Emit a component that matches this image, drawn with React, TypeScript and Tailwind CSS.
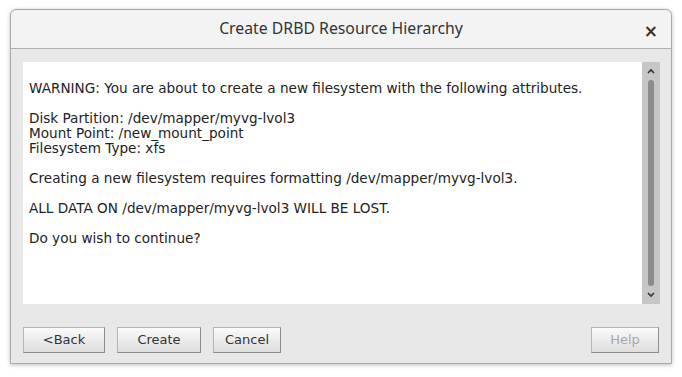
import React from 'react'

/* ── Dialog text ── */

const LINES = [
  'WARNING: You are about to create a new filesystem with the following attributes.',
  '',
  'Disk Partition: /dev/mapper/myvg-lvol3',
  'Mount Point: /new_mount_point',
  'Filesystem Type: xfs',
  '',
  'Creating a new filesystem requires formatting /dev/mapper/myvg-lvol3.',
  '',
  'ALL DATA ON /dev/mapper/myvg-lvol3 WILL BE LOST.',
  '',
  'Do you wish to continue?',
]

function SwingButton({ label, disabled, className }: { label: string; disabled?: boolean; className: string }) {
  return (
    <button
      disabled={disabled}
      className={`h-[26px] border border-[#b4b4b4] border-b-[#8e8e8e] border-r-[#8e8e8e] bg-gradient-to-b from-[#fafafa] to-[#dedede] text-[13px] ${
        disabled ? 'text-[#a8a8a8]' : 'text-[#333]'
      } ${className}`}
    >
      {label}
    </button>
  )
}

export default function App() {
  return (
    <div className="w-[682px] h-[377px] bg-white pt-[9px] pl-[10px] font-['DejaVu_Sans',sans-serif]">
      <div className="w-[662px] h-[355px] flex flex-col border border-[#a9a9a9] rounded-t-[6px] bg-[#e8e8e8] shadow-[0_1px_4px_rgba(0,0,0,0.25)]">
        {/* Title bar */}
        <div className="h-[39px] shrink-0 relative flex items-center justify-center bg-[#f3f3f3] border-b border-[#b0b0b0] rounded-t-[6px]">
          <span className="text-[15.8px] text-[#2e3436] font-['Noto_Sans',sans-serif]">Create DRBD Resource Hierarchy</span>
          <span className="absolute right-[13px] top-[9px] text-[17px] font-bold text-[#2e3436] font-['DejaVu_Sans',sans-serif]">×</span>
        </div>

        {/* Body */}
        <div className="flex-1 flex flex-col pt-[13px] pl-[12px] pr-[11px]">
          <div className="h-[242px] flex bg-white">
            <div className="flex-1 pt-[19px] pl-[6px] text-[13.6px] leading-[15px] text-[#222]">
              {LINES.map((l, i) => (
                <div key={i} className="h-[15px] whitespace-pre">{l}</div>
              ))}
            </div>
            {/* Scrollbar */}
            <div className="w-[18px] flex flex-col items-center bg-[#c6c6c6]">
              <svg width="10" height="8" viewBox="0 0 10 8" className="mt-[5px]">
                <path d="M2 6 L5 3 L8 6" stroke="#333" strokeWidth="1.6" fill="none" />
              </svg>
              <div className="w-[6px] flex-1 mt-[5px] mb-[5px] rounded-[3px] bg-[#8c8c8c]" />
              <svg width="10" height="8" viewBox="0 0 10 8" className="mb-[5px]">
                <path d="M2 2 L5 5 L8 2" stroke="#333" strokeWidth="1.6" fill="none" />
              </svg>
            </div>
          </div>

          {/* Buttons */}
          <div className="flex mt-[23px]">
            <SwingButton label="<Back" className="w-[82px]" />
            <SwingButton label="Create" className="w-[84px] ml-[12px]" />
            <SwingButton label="Cancel" className="w-[68px] ml-[12px]" />
            <SwingButton label="Help" disabled className="w-[68px] ml-auto mr-[1px]" />
          </div>
        </div>
      </div>
    </div>
  )
}
